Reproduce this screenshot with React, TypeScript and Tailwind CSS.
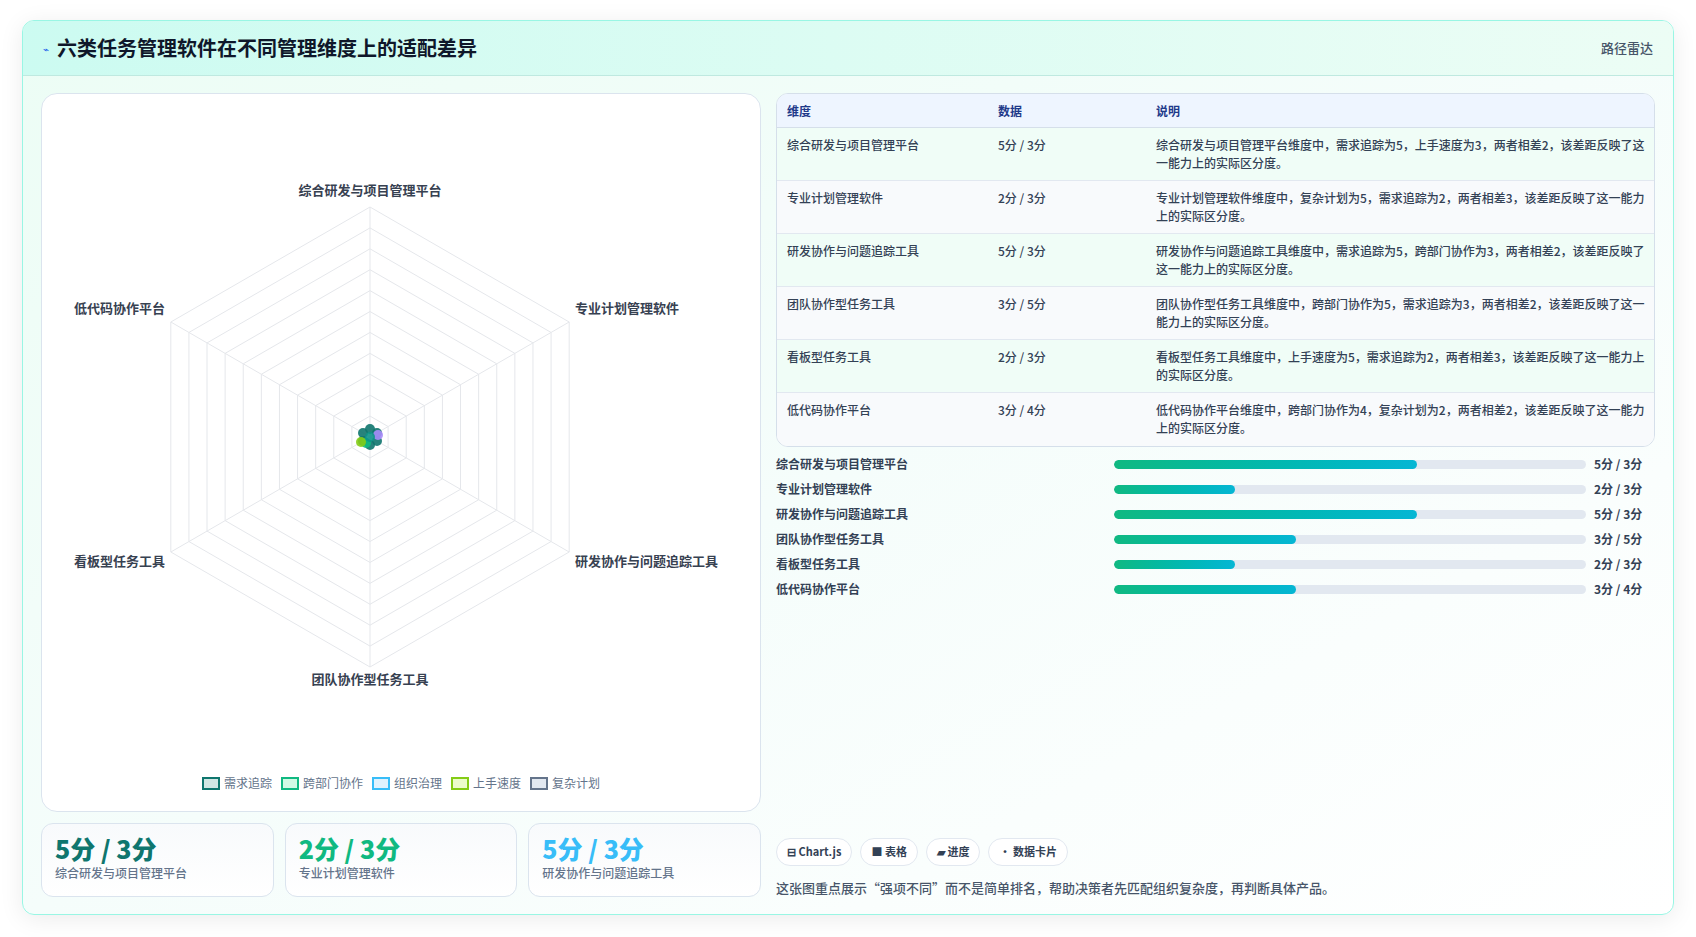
import React from 'react';

const ROWS = [
  { name: '综合研发与项目管理平台', data: '5分 / 3分', v: 5, note: '综合研发与项目管理平台维度中，需求追踪为5，上手速度为3，两者相差2，该差距反映了这一能力上的实际区分度。' },
  { name: '专业计划管理软件', data: '2分 / 3分', v: 2, note: '专业计划管理软件维度中，复杂计划为5，需求追踪为2，两者相差3，该差距反映了这一能力上的实际区分度。' },
  { name: '研发协作与问题追踪工具', data: '5分 / 3分', v: 5, note: '研发协作与问题追踪工具维度中，需求追踪为5，跨部门协作为3，两者相差2，该差距反映了这一能力上的实际区分度。' },
  { name: '团队协作型任务工具', data: '3分 / 5分', v: 3, note: '团队协作型任务工具维度中，跨部门协作为5，需求追踪为3，两者相差2，该差距反映了这一能力上的实际区分度。' },
  { name: '看板型任务工具', data: '2分 / 3分', v: 2, note: '看板型任务工具维度中，上手速度为5，需求追踪为2，两者相差3，该差距反映了这一能力上的实际区分度。' },
  { name: '低代码协作平台', data: '3分 / 4分', v: 3, note: '低代码协作平台维度中，跨部门协作为4，复杂计划为2，两者相差2，该差距反映了这一能力上的实际区分度。' },
];

const LEGEND = [
  { label: '需求追踪', border: 'border-[#0f766e]', bg: 'bg-[#d1e7e4]' },
  { label: '跨部门协作', border: 'border-[#10b981]', bg: 'bg-[#d1fae5]' },
  { label: '组织治理', border: 'border-[#38bdf8]', bg: 'bg-[#e0f2fe]' },
  { label: '上手速度', border: 'border-[#84cc16]', bg: 'bg-[#ecfccb]' },
  { label: '复杂计划', border: 'border-[#64748b]', bg: 'bg-[#e2e8f0]' },
];

const CX = 329;
const CY = 343;
const R = 230;

function pt(i: number, r: number) {
  const a = -Math.PI / 2 + (i * Math.PI) / 3;
  return [CX + r * Math.cos(a), CY + r * Math.sin(a)];
}

function Radar() {
  const rings = Array.from({ length: 11 }, (_, k) => ((k + 1) * R) / 11);
  const labels = [
    { t: '综合研发与项目管理平台', x: 329, y: 101, a: 'middle' },
    { t: '专业计划管理软件', x: 534, y: 219, a: 'start' },
    { t: '研发协作与问题追踪工具', x: 534, y: 472, a: 'start' },
    { t: '团队协作型任务工具', x: 329, y: 590, a: 'middle' },
    { t: '看板型任务工具', x: 124, y: 472, a: 'end' },
    { t: '低代码协作平台', x: 124, y: 219, a: 'end' },
  ];
  const dots = [
    ['#0f766e', 0, -8], ['#0f766e', 7, -4], ['#0f766e', 7, 4], ['#0f766e', 0, 8], ['#0f766e', -7, 4], ['#0f766e', -7, -4],
    ['#10b981', -4, 6], ['#84cc16', -9, 5], ['#a78bfa', 8, -2], ['#0d9488', 0, 0],
  ] as const;
  return (
    <svg width="720" height="640" className="block">
      {rings.map((r, k) => (
        <polygon
          key={k}
          points={[0, 1, 2, 3, 4, 5].map((i) => pt(i, r).join(',')).join(' ')}
          fill="none"
          stroke="#e5e7eb"
          strokeWidth="1"
        />
      ))}
      {[0, 1, 2, 3, 4, 5].map((i) => {
        const [x, y] = pt(i, R);
        return <line key={i} x1={CX} y1={CY} x2={x} y2={y} stroke="#e5e7eb" />;
      })}
      {dots.map(([c, dx, dy], k) => (
        <circle key={k} cx={CX + dx} cy={CY + dy} r="5" fill={c} opacity="0.9" />
      ))}
      {labels.map((l) => (
        <text key={l.t} x={l.x} y={l.y} textAnchor={l.a as 'middle'} fontSize="13" fontWeight="700" fill="#374151">
          {l.t}
        </text>
      ))}
    </svg>
  );
}

export default function App() {
  const font = { fontFamily: '"Noto Sans CJK SC", "Noto Sans", sans-serif' };
  return (
    <div className="w-[1696px] h-[937px] bg-white pt-[20px] pl-[22px]" style={font}>
      <div className="w-[1652px] h-[895px] rounded-xl border border-[#99f6e4] shadow-[0_4px_24px_rgba(0,0,0,0.08)] bg-gradient-to-br from-[#ecfdf5] via-[#f5fdfb] to-white overflow-hidden flex flex-col">
        <div className="h-[55px] shrink-0 flex items-center justify-between px-[20px] bg-gradient-to-r from-[#ccfbf1] to-[#ecfdf5] border-b border-[#bfe9e0]">
          <div className="flex items-center gap-2">
            <span className="text-[#2563eb] text-[10px]">⌁</span>
            <h1 className="text-[20px] font-bold text-[#0f172a]">六类任务管理软件在不同管理维度上的适配差异</h1>
          </div>
          <span className="text-[13px] text-[#475569] font-medium">路径雷达</span>
        </div>

        <div className="flex gap-[15px] px-[18px] pt-[17px]">
          <div className="w-[720px] flex flex-col gap-[11px]">
            <div className="h-[719px] rounded-2xl border border-[#dbe4ee] bg-white flex flex-col items-center">
              <Radar />
              <div className="flex items-center gap-[9px] mt-[40px] text-[12px] text-[#64748b]">
                {LEGEND.map((l) => (
                  <div key={l.label} className="flex items-center gap-1">
                    <span className={`w-[18px] h-[13px] border-2 ${l.border} ${l.bg}`} />
                    {l.label}
                  </div>
                ))}
              </div>
            </div>
            <div className="grid grid-cols-3 gap-[11px]">
              {[
                { v: '5分 / 3分', c: 'text-[#0f766e]', n: '综合研发与项目管理平台' },
                { v: '2分 / 3分', c: 'text-[#10b981]', n: '专业计划管理软件' },
                { v: '5分 / 3分', c: 'text-[#38bdf8]', n: '研发协作与问题追踪工具' },
              ].map((s) => (
                <div key={s.n} className="h-[74px] rounded-xl border border-[#dbe4ee] bg-gradient-to-b from-[#f8fafc] to-white px-[13px] pt-[8px]">
                  <div className={`text-[25px] font-extrabold leading-[32px] ${s.c}`}>{s.v}</div>
                  <div className="text-[12px] text-[#64748b] font-medium">{s.n}</div>
                </div>
              ))}
            </div>
          </div>

          <div className="flex-1 flex flex-col">
            <div className="rounded-xl border border-[#d5dfea] overflow-hidden bg-white">
              <div className="grid grid-cols-[211px_158px_1fr] h-[34px] items-center bg-[#eef5ff] border-b border-[#d5dfea] pl-[10px] pr-[4px] text-[12px] font-bold text-[#1e3a8a]">
                <div>维度</div>
                <div>数据</div>
                <div>说明</div>
              </div>
              {ROWS.map((r, i) => (
                <div
                  key={r.name}
                  className={`grid grid-cols-[211px_158px_1fr] h-[53px] pl-[10px] pr-[4px] pt-[8px] text-[12px] leading-[18px] text-[#334155] font-medium ${i < 5 ? 'border-b border-[#e2e8f0]' : ''} ${i % 2 === 0 ? 'bg-[#f0fdf7]' : 'bg-[#f8fafc]'}`}
                >
                  <div>{r.name}</div>
                  <div>{r.data}</div>
                  <div>{r.note}</div>
                </div>
              ))}
            </div>

            <div className="flex flex-col gap-[7px] mt-[8px]">
              {ROWS.map((r) => (
                <div key={r.name} className="flex items-center h-[18px] text-[12px] font-bold text-[#334155]">
                  <div className="w-[338px]">{r.name}</div>
                  <div className="w-[472px] h-[9px] rounded-full bg-[#e2e8f0] overflow-hidden">
                    <div
                      className="h-full rounded-full bg-gradient-to-r from-[#10b981] to-[#06b6d4]"
                      style={{ width: `${(r.v / 7.8) * 100}%` }}
                    />
                  </div>
                  <div className="ml-[8px]">{r.data}</div>
                </div>
              ))}
            </div>

            <div className="flex-1" />
            <div className="flex gap-[8px] mt-auto">
              {['⊟ Chart.js', '■ 表格', '▰ 进度', '• 数据卡片'].map((c) => (
                <span key={c} className="h-[28px] px-[10px] flex items-center rounded-full border border-[#e2e8f0] bg-white text-[11px] font-bold text-[#334155]">
                  {c}
                </span>
              ))}
            </div>
            <p className="mt-[12px] text-[13px] text-[#475569] font-medium">
              这张图重点展示“强项不同”而不是简单排名，帮助决策者先匹配组织复杂度，再判断具体产品。
            </p>
          </div>
        </div>
      </div>
    </div>
  );
}
